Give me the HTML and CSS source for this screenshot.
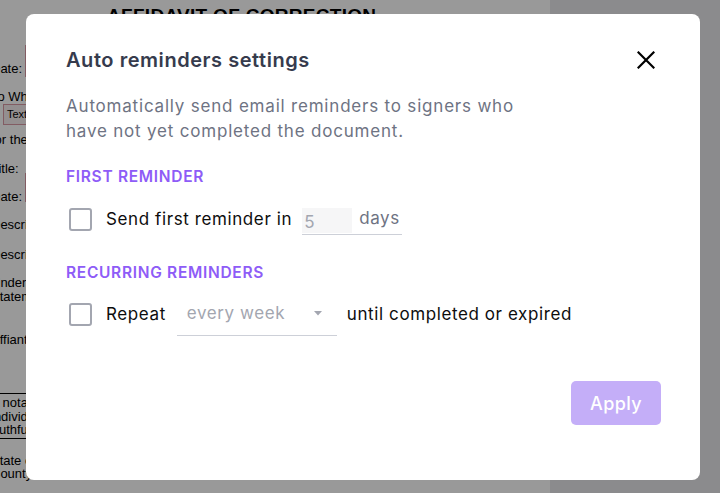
FILE: index.html
```html
<!DOCTYPE html>
<html>
<head>
<meta charset="utf-8">
<link rel="stylesheet" href="styles.css">
</head>
<body>
<div class="screen">
  <div class="page">
    <div class="doc-title">AFFIDAVIT OF CORRECTION</div>
    <div class="doc-line l-date1">Date:</div>
    <div class="doc-line l-to">To Whom It May Concern</div>
    <div class="doc-line l-for">for the</div>
    <div class="doc-line l-title">Title:</div>
    <div class="doc-line l-date2">Date:</div>
    <div class="doc-line l-d1">Description</div>
    <div class="doc-line l-d2">Description</div>
    <div class="doc-line l-under">Under</div>
    <div class="doc-line l-stat">Statement</div>
    <div class="doc-line l-aff">Affiant</div>
    <div class="notary">
      <div>A notary</div>
      <div>individual</div>
      <div>truthfulness</div>
    </div>
    <div class="doc-line l-state">State of</div>
    <div class="doc-line l-county">County</div>
    <span class="field f-date1"></span>
    <span class="field f-text">Text</span>
    <span class="field f-title"></span>
  </div>
  <div class="rest"></div>
</div>
<div class="overlay"></div>
<div class="modal">
  <div class="modal-head">
    <h2 class="modal-title">Auto reminders settings</h2>
    <button class="close" aria-label="Close">
      <svg width="18" height="18" viewBox="0 0 18 18"><path d="M1.5 1.5 L16.5 16.5 M16.5 1.5 L1.5 16.5" stroke="#000" stroke-width="2.2" stroke-linecap="square" fill="none"/></svg>
    </button>
  </div>
  <p class="desc">Automatically send email reminders to signers who<br>have not yet completed the document.</p>
  <div class="section-label first">FIRST REMINDER</div>
  <div class="row row-first">
    <span class="check"></span>
    <span class="label">Send first reminder in</span>
    <span class="num-input"><span class="num">5</span><span class="unit">days</span></span>
  </div>
  <div class="section-label recur">RECURRING REMINDERS</div>
  <div class="row row-recur">
    <span class="check"></span>
    <span class="label">Repeat</span>
    <span class="select"><span class="sel-text">every week</span><svg class="caret" width="8" height="5" viewBox="0 0 8 5"><path d="M0 0 L8 0 L4 4.5 Z" fill="#a3a6b0"/></svg></span>
    <span class="label">until completed or expired</span>
  </div>
  <div class="foot">
    <button class="apply">Apply</button>
  </div>
</div>
</body>
</html>
```
FILE: styles.css
```css
html, body {
  margin: 0;
  padding: 0;
  width: 720px;
  height: 493px;
  overflow: hidden;
}
body {
  background: #e8e8eb;
  font-family: "Liberation Sans", Arial, sans-serif;
}
.screen {
  display: flex;
  height: 493px;
}
.page {
  position: relative;
  width: 559px;
  margin-left: -9px;
  background: #fff;
  color: #000;
  font-size: 13px;
  line-height: 15px;
  flex: none;
  display: flex;
  flex-direction: column;
}
.rest {
  flex: 1;
}
.doc-title {
  font-weight: bold;
  font-size: 19px;
  line-height: 22px;
  margin-top: 5px;
  margin-left: 116px;
  letter-spacing: 0.3px;
}
.doc-line {
  white-space: nowrap;
}
.l-date1 { margin-top: 33.5px; }
.l-to { margin-top: 13px; }
.l-for { margin-top: 28px; }
.l-title { margin-top: 14px; }
.l-date2 { margin-top: 13px; }
.l-d1 { margin-top: 13px; }
.l-d2 { margin-top: 15px; }
.l-under { margin-top: 14.5px; line-height: 14px; }
.l-stat { margin-top: 0; line-height: 14px; }
.l-aff { margin-top: 27.5px; }
.notary {
  margin-top: 46.5px;
  height: 42px;
  border-top: 1px solid #000;
  border-bottom: 1px solid #000;
  padding-top: 2px;
  box-sizing: content-box;
  margin-right: 300px;
}
.notary div { line-height: 13.5px; white-space: nowrap; }
.l-state { margin-top: 14.5px; line-height: 13px; }
.l-county { margin-top: 0; line-height: 13px; }

.field {
  position: absolute;
  border: 1px solid #d99aa6;
  background: #f7eef0;
  box-sizing: border-box;
}
.f-date1 { left: 34px; top: 45px; width: 90px; height: 32px; }
.f-title { left: 34px; top: 173px; width: 90px; height: 29px; }
.f-text {
  left: 12px;
  top: 104px;
  width: 110px;
  height: 21px;
  font-size: 11px;
  line-height: 19px;
  padding-left: 3px;
}

.overlay {
  position: fixed;
  inset: 0;
  background: rgba(0, 0, 0, 0.4);
}

.modal {
  position: fixed;
  left: 26px;
  top: 14px;
  width: 674px;
  height: 466px;
  box-sizing: border-box;
  background: #fff;
  border-radius: 8px;
  padding: 34px 39px 55px 40px;
  font-family: "Inter", "Open Sans", sans-serif;
  display: flex;
  flex-direction: column;
}
.modal-head {
  display: flex;
  justify-content: space-between;
  align-items: center;
}
.modal-title {
  margin: 0;
  font-size: 20px;
  line-height: 24px;
  font-weight: 600;
  color: #363b4d;
  letter-spacing: 0.55px;
}
.close {
  border: 0;
  background: none;
  padding: 0;
  width: 18px;
  height: 18px;
  margin-right: 6px;
  display: flex;
}
.desc {
  margin: 22px 0 0;
  font-size: 17px;
  line-height: 25px;
  color: #6e7383;
  letter-spacing: 0.8px;
}
.section-label {
  font-size: 15.5px;
  line-height: 20px;
  font-weight: 600;
  color: #8e5cf7;
  letter-spacing: 0.7px;
}
.section-label.first { margin-top: 23px; }
.section-label.recur { margin-top: 29px; }
.row {
  display: flex;
  align-items: center;
  font-size: 17px;
  color: #0d0d0d;
  letter-spacing: 0.6px;
}
.row-first { margin-top: 17px; height: 30px; }
.row-recur { margin-top: 9px; height: 44px; }
.check {
  width: 19px;
  height: 19px;
  border: 2px solid #a3a6b0;
  border-radius: 3px;
  margin-left: 3px;
  margin-right: 14px;
  flex: none;
}
.num-input {
  display: flex;
  align-items: center;
  width: 100px;
  height: 27px;
  border-bottom: 1px solid #cdd0d8;
  margin-left: 10px;
  margin-top: 4px;
  flex: none;
}
.num {
  width: 48px;
  height: 25px;
  background: #f6f6f7;
  color: #a3a6b0;
  padding-left: 2px;
  line-height: 29px;
  font-size: 17px;
}
.unit {
  margin-left: 7px;
  color: #6e7383;
  margin-top: -6px;
}
.select {
  display: flex;
  align-items: center;
  width: 160px;
  height: 43px;
  box-sizing: border-box;
  border-bottom: 1px solid #cdd0d8;
  margin-left: 11px;
  margin-right: 10px;
  padding-left: 10px;
  padding-bottom: 2px;
  margin-top: 1px;
  flex: none;
}
.sel-text {
  color: #a3a6b0;
  flex: 1;
}
.caret {
  margin-right: 15px;
}
.foot {
  margin-top: auto;
  display: flex;
  justify-content: flex-end;
}
.apply {
  width: 90px;
  height: 44px;
  border: 0;
  border-radius: 5px;
  background: #c4aef8;
  color: #fff;
  font-family: "Inter", "Open Sans", sans-serif;
  font-size: 18px;
  font-weight: 500;
  letter-spacing: 0.4px;
}
```
